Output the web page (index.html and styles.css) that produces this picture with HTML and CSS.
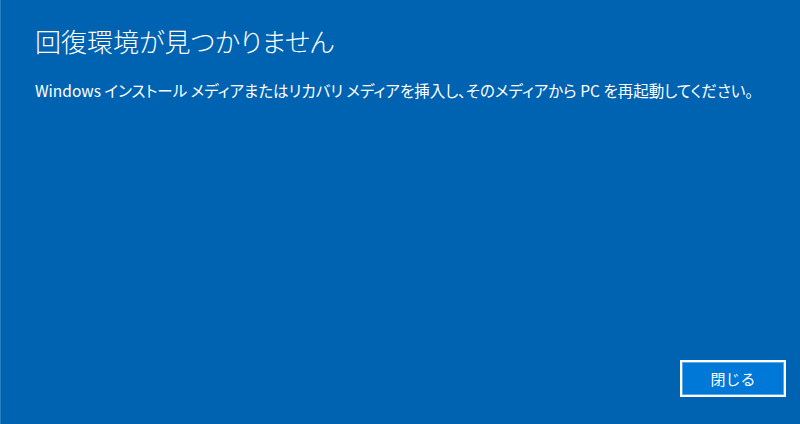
FILE: index.html
```html
<!DOCTYPE html>
<html lang="ja">
<head>
<meta charset="utf-8">
<title>回復環境が見つかりません</title>
<link rel="stylesheet" href="styles.css">
</head>
<body>
<div class="screen">
  <div class="content">
    <h1 class="title">回復環境が見つかりません</h1>
    <p class="message">Windows インストール メディアまたはリカバリ メディアを挿入し、そのメディアから PC を再起動してください。</p>
  </div>
  <div class="actions">
    <button class="btn">閉じる</button>
  </div>
</div>
</body>
</html>
```
FILE: styles.css
```css
html, body {
  margin: 0;
  padding: 0;
  width: 800px;
  height: 424px;
  overflow: hidden;
}
body {
  background: #0063b1;
  font-family: "Noto Sans CJK JP", "Noto Sans", sans-serif;
  color: #ffffff;
}
.screen {
  box-sizing: border-box;
  width: 800px;
  height: 424px;
  display: flex;
  flex-direction: column;
  justify-content: space-between;
  border-left: 1px solid #2a7cc0;
  padding: 22px 14px 27px 34px;
}
.title {
  margin: 0;
  font-size: 26px;
  font-weight: 300;
  line-height: 38px;
  font-feature-settings: "palt";
  letter-spacing: 0;
}
.message {
  margin: 19px 0 0 0;
  font-size: 15.5px;
  font-weight: 400;
  line-height: 22px;
  font-feature-settings: "palt";
}
.actions {
  display: flex;
  justify-content: flex-end;
}
.btn {
  box-sizing: border-box;
  width: 106px;
  height: 37px;
  background: #0078d7;
  border: 2px solid #ffffff;
  box-shadow: inset 0 0 0 1px #5aa6e6;
  color: #ffffff;
  font-family: "Noto Sans CJK JP", sans-serif;
  font-size: 15px;
  padding: 0;
}
```
